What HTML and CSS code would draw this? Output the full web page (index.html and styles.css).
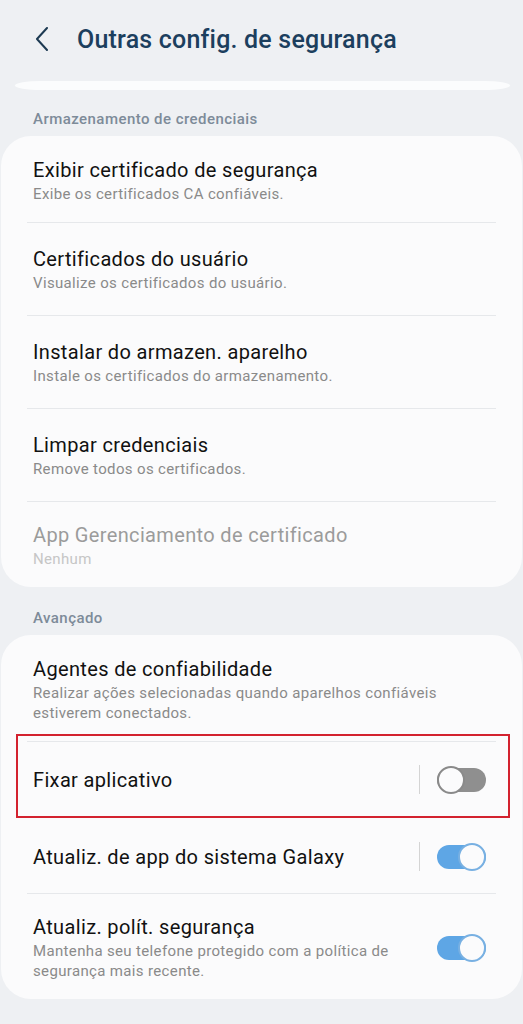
FILE: index.html
```html
<html>
    <head>
        <meta charset="utf-8">
        <link rel="stylesheet" href="styles.css">
    </head>
    <body>
        <div class="topbar">
            <svg class="back" width="14" height="24" viewBox="0 0 14 24">
                <path d="M12 1 L2 12 L12 23" fill="none" stroke="#1d3a52" stroke-width="2" stroke-linecap="round" stroke-linejoin="round"/>
            </svg>
            <h1 class="title">Outras config. de segurança</h1>
        </div>

        <div class="sliver"></div>

        <div class="section">Armazenamento de credenciais</div>
        <div class="card">
            <div class="item">
                <div class="txt">
                    <div class="name">Exibir certificado de segurança</div>
                    <div class="sub">Exibe os certificados CA confiáveis.</div>
                </div>
            </div>
            <div class="item">
                <div class="txt">
                    <div class="name">Certificados do usuário</div>
                    <div class="sub">Visualize os certificados do usuário.</div>
                </div>
            </div>
            <div class="item">
                <div class="txt">
                    <div class="name">Instalar do armazen. aparelho</div>
                    <div class="sub">Instale os certificados do armazenamento.</div>
                </div>
            </div>
            <div class="item">
                <div class="txt">
                    <div class="name">Limpar credenciais</div>
                    <div class="sub">Remove todos os certificados.</div>
                </div>
            </div>
            <div class="item off">
                <div class="txt">
                    <div class="name">App Gerenciamento de certificado</div>
                    <div class="sub">Nenhum</div>
                </div>
            </div>
        </div>

        <div class="section">Avançado</div>
        <div class="card">
            <div class="item">
                <div class="txt">
                    <div class="name">Agentes de confiabilidade</div>
                    <div class="sub">Realizar ações selecionadas quando aparelhos confiáveis estiverem conectados.</div>
                </div>
            </div>
            <div class="item row marked">
                <div class="txt">
                    <div class="name">Fixar aplicativo</div>
                </div>
                <div class="vbar"></div>
                <div class="switch"><div class="knob"></div></div>
                <div class="redbox"></div>
            </div>
            <div class="item row">
                <div class="txt">
                    <div class="name">Atualiz. de app do sistema Galaxy</div>
                </div>
                <div class="vbar"></div>
                <div class="switch on"><div class="knob"></div></div>
            </div>
            <div class="item">
                <div class="txt narrow">
                    <div class="name">Atualiz. polít. segurança</div>
                    <div class="sub">Mantenha seu telefone protegido com a política de segurança mais recente.</div>
                </div>
                <div class="switch on"><div class="knob"></div></div>
            </div>
        </div>
    </body>
</html>
```

FILE: styles.css
```css
body {
    margin: 0;
    background-color: #eef0f3;
    font-family: Roboto, "Liberation Sans", sans-serif;
}
.topbar {
    display: flex;
    align-items: center;
    height: 78px;
    padding-left: 35px;
}
.back {
    margin-right: 28px;
}
.title {
    margin: 0;
    font-size: 25px;
    letter-spacing: 0.2px;
    font-weight: 500;
    color: #1c3f5e;
}
.sliver {
    height: 9px;
    margin: 3px 13px 0 15px;
    background-color: #fbfcfd;
    border-radius: 26px / 4.5px;
}
.section {
    font-size: 15px;
    letter-spacing: 0.45px;
    font-weight: 500;
    line-height: 20px;
    color: #7d8b99;
    padding: 19px 0 7px 33px;
}
.card + .section {
    padding-top: 21px;
}
.card {
    margin: 0 1px;
    padding: 0 26px;
    background-color: #fbfbfc;
    border-radius: 30px;
}
.item {
    display: flex;
    align-items: center;
    padding: 23px 10px 22px 6px;
    border-top: 1px solid #e6e8eb;
}
.item:first-child {
    border-top: none;
    padding-top: 21px;
    padding-bottom: 18px;
}
.item:last-child {
    padding-top: 20px;
    padding-bottom: 18px;
}
.item.row {
    padding-top: 23px;
    padding-bottom: 23px;
}
.item.row + .item.row {
    padding-top: 24px;
    padding-bottom: 22px;
}
.txt {
    flex: 1;
}
.txt.narrow {
    padding-right: 40px;
}
.name {
    font-size: 20px;
    letter-spacing: 0.35px;
    line-height: 26px;
    color: #111;
}
.sub {
    font-size: 15px;
    letter-spacing: 0.35px;
    line-height: 20px;
    margin-top: 1px;
    color: #8a8a8a;
}
.off .name {
    color: #9b9b9b;
}
.off .sub {
    color: #c6c6c6;
}
.vbar {
    width: 1px;
    height: 29px;
    background-color: #d4d4d4;
    margin-right: 17px;
}
.switch {
    position: relative;
    width: 49px;
    height: 24px;
    border-radius: 12px;
    background-color: #8f8f8f;
}
.knob {
    position: absolute;
    top: -2px;
    left: 0;
    width: 24px;
    height: 24px;
    border-radius: 50%;
    background-color: #fbfbfc;
    border: 2px solid #8a8a8a;
}
.switch.on {
    background-color: #5ea6e5;
}
.switch.on .knob {
    left: auto;
    right: 0;
    border-color: #78b0e2;
}
.marked {
    position: relative;
}
.redbox {
    position: absolute;
    top: -8px;
    bottom: -1px;
    left: -11px;
    right: -14px;
    border: 2.5px solid #d3222f;
}
```
